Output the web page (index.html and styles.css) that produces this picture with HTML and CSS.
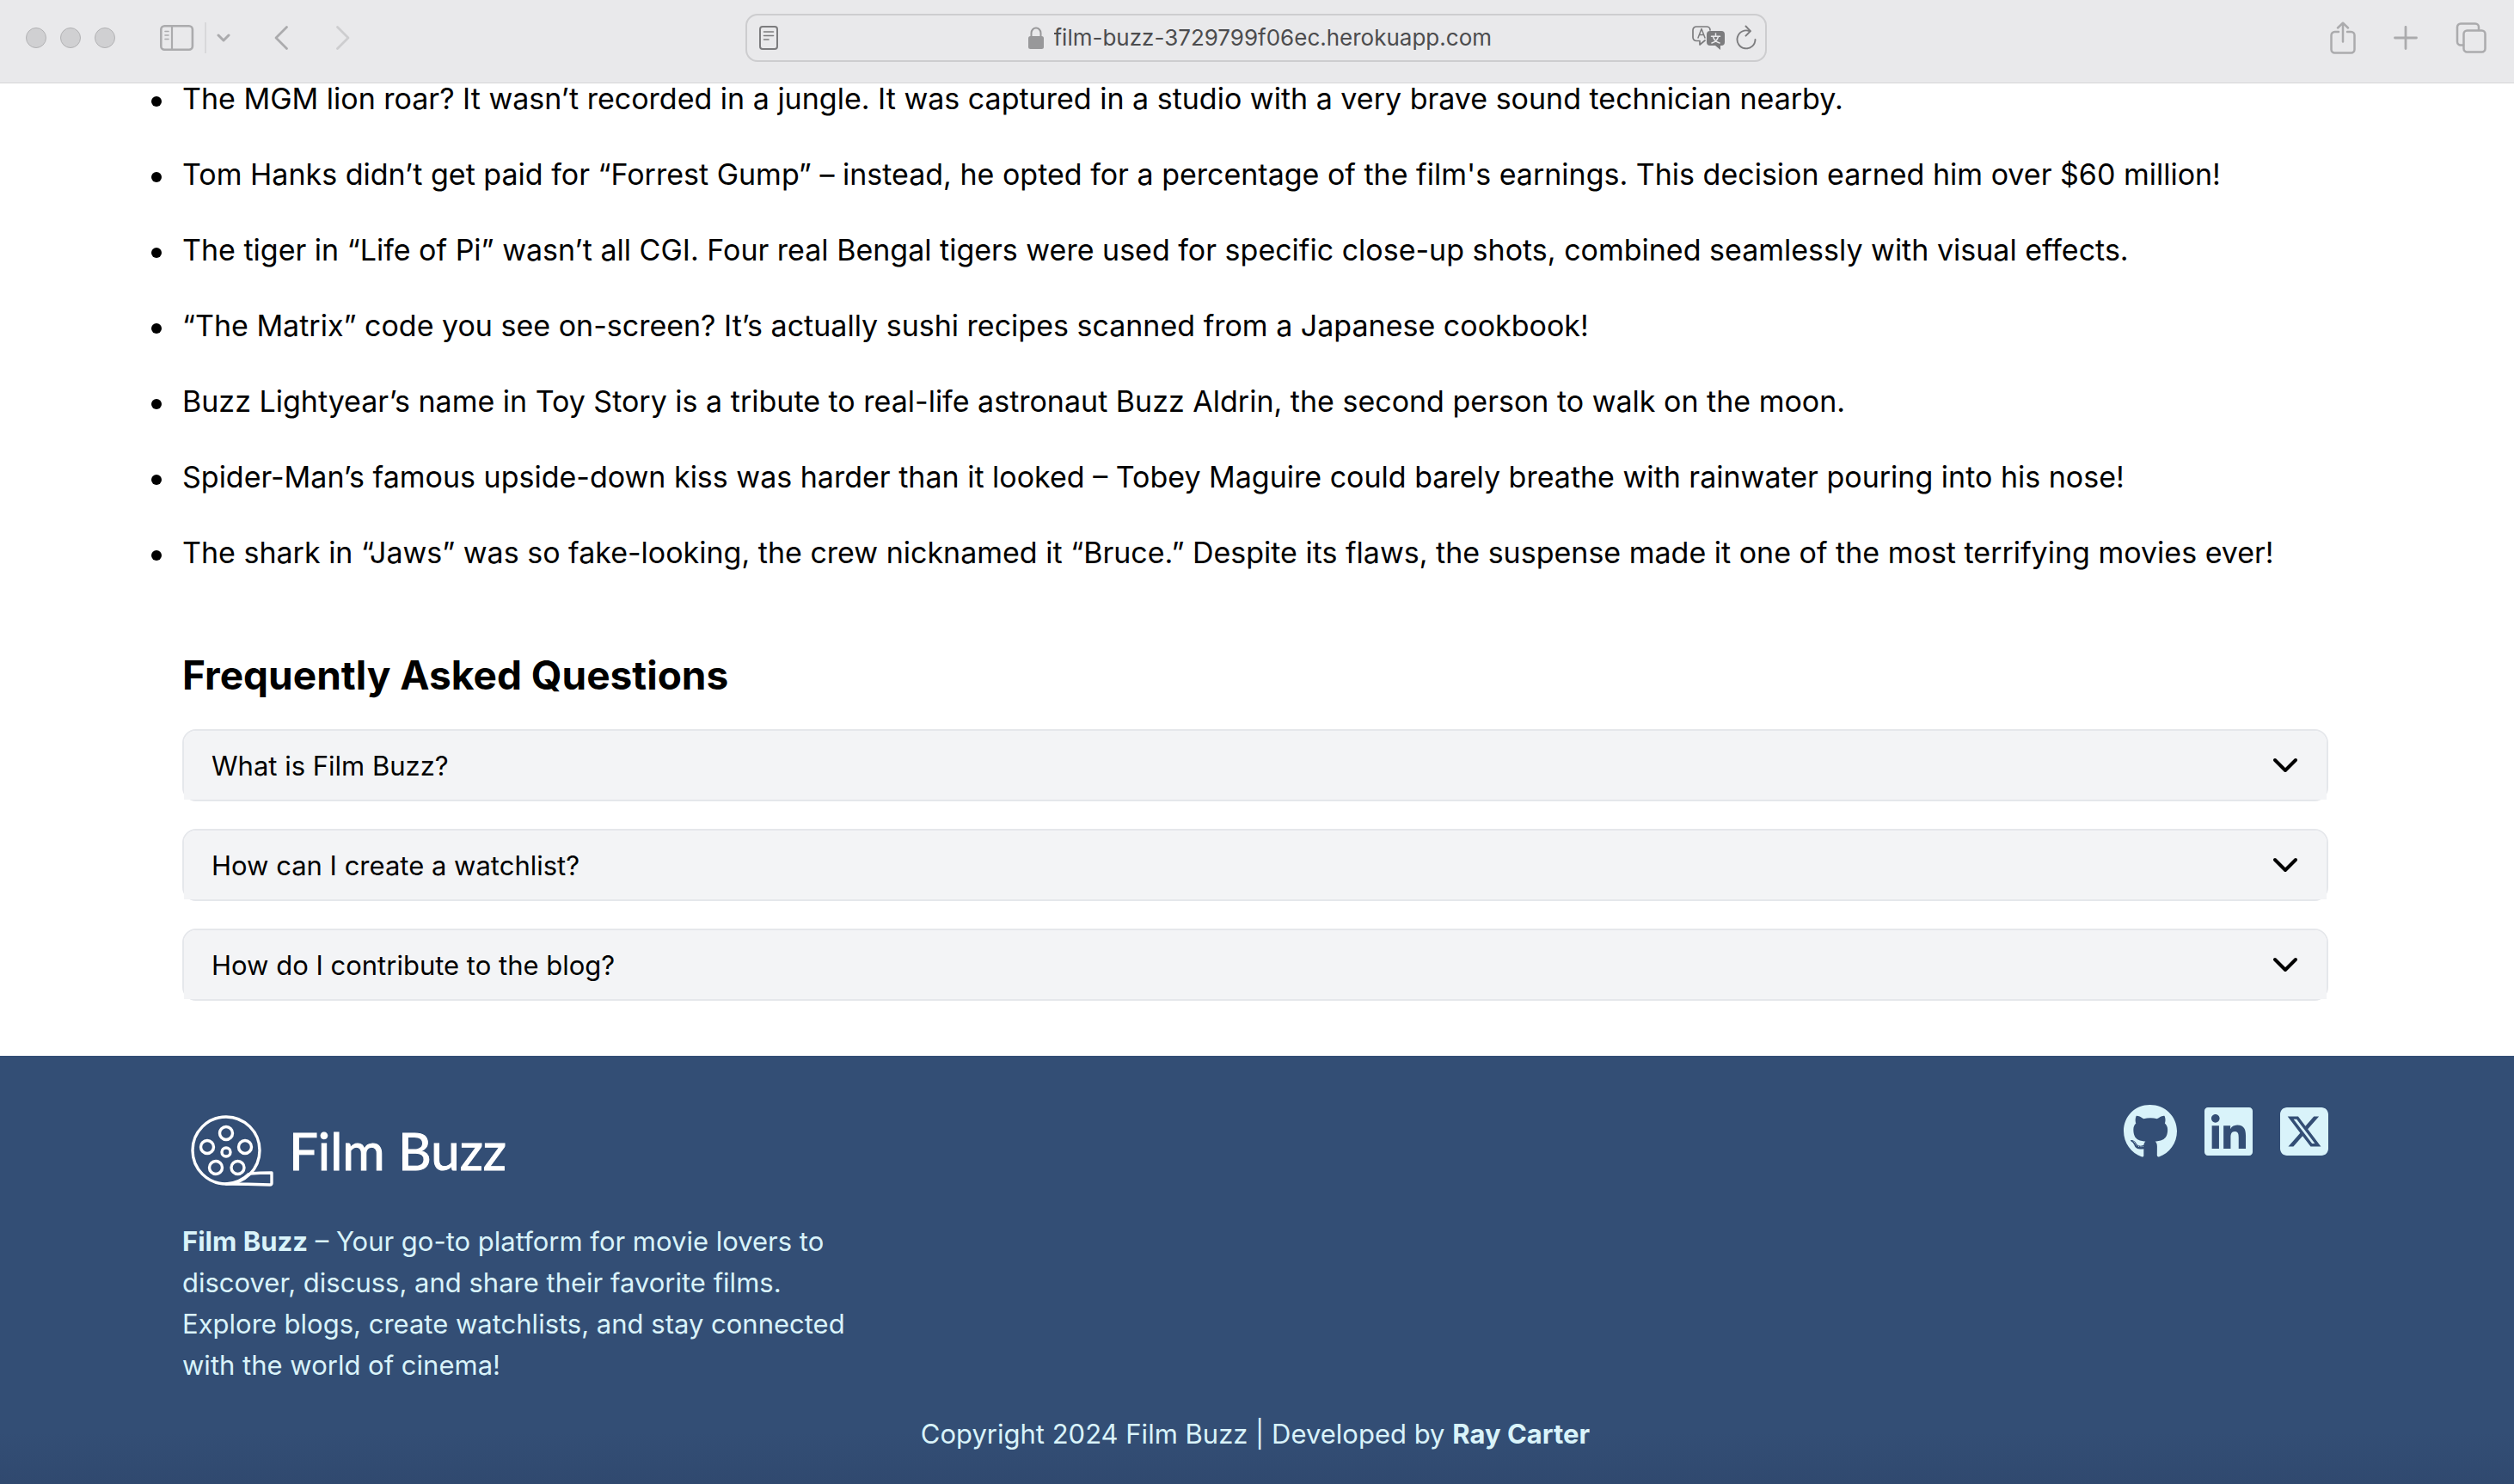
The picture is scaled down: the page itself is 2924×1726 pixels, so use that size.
FILE: index.html
```html
<!DOCTYPE html>
<html lang="en">
<head>
<meta charset="utf-8">
<title>Film Buzz</title>
<link rel="stylesheet" href="styles.css">
</head>
<body>
<header class="toolbar">
  <div class="toolbar-left">
    <div class="window-dots"><span class="dot"></span><span class="dot"></span><span class="dot"></span></div>
    <div class="sidebar-tools">
      <button class="tool" aria-label="Show sidebar"><svg width="40" height="30" viewBox="0 0 40 30"><rect x="1.3" y="1.3" width="36.6" height="27.4" rx="4" stroke-width="2.6"/><path d="M14 1v28" stroke-width="2.2"/><path d="M6 7.5h4M6 12h4M6 16.5h4" stroke-width="1.6"/></svg></button>
      <span class="divider"></span>
      <button class="tool" aria-label="Tab groups"><svg width="16" height="12" viewBox="0 0 16 12"><path d="M2 3l6 6 6-6" stroke-width="3"/></svg></button>
    </div>
    <div class="history">
      <button class="tool" aria-label="Back"><svg width="18" height="30" viewBox="0 0 18 30"><path d="M15.500 2.500L3 15l12.500 12.500" stroke-width="2.8"/></svg></button>
      <button class="tool faded" aria-label="Forward"><svg width="18" height="30" viewBox="0 0 18 30"><path d="M2.500 2.500L15 15 2.500 27.500" stroke-width="2.8"/></svg></button>
    </div>
  </div>
  <div class="address">
    <button class="tool dark" aria-label="Reader"><svg width="22" height="28" viewBox="0 0 22 28"><rect x="1" y="1" width="20" height="26" rx="3" stroke-width="2"/><path d="M5.500 7h11M5.500 11.500h11M5.500 16h5.500" stroke-width="1.600"/></svg></button>
    <div class="location">
      <svg width="18" height="26" viewBox="0 0 18 26"><rect x="0" y="11" width="18" height="15" rx="2.500" fill="#98989a"/><path d="M3.500 12V7.500a5.500 6 0 0 1 11 0V12" fill="none" stroke="#98989a" stroke-width="2"/></svg>
      <input class="url" type="text" aria-label="Address" value="film-buzz-3729799f06ec.herokuapp.com">
    </div>
    <div class="address-tools">
      <button class="tool dark" aria-label="Translate"><svg width="39" height="28" viewBox="0 0 39 28"><path d="M15 17l-6 5v-4.500H5A4 4 0 0 1 1 13.500V5a4 4 0 0 1 4-4h12a4 4 0 0 1 4 4" stroke-width="1.700"/><path d="M7 14l4-10.500L15 14M8.500 10.500h5" stroke-width="1.500"/><path d="M21 6h13a4 4 0 0 1 4 4v9a4 4 0 0 1-4 4h-1v5l-6-5h-6a4 4 0 0 1-4-4v-9a4 4 0 0 1 4-4z" fill="#7c7c7e" stroke="none"/><path d="M27.500 9v3M22.500 12.200h10M30.500 12.500c-1 4-4 6.500-7.500 7.500M24.500 12.500c1 4 4 6.500 7.500 7.500" stroke="#e9e9eb" stroke-width="1.500"/></svg></button>
      <button class="tool dark" aria-label="Reload"><svg width="24" height="30" viewBox="0 0 24 30"><path d="M16 7.200A10.500 10.500 0 1 0 22.500 17" stroke-width="1.900"/><path d="M11.500 1.500l5.500 5.700-5.500 5.500" stroke-width="1.900"/></svg></button>
    </div>
  </div>
  <div class="toolbar-right">
    <button class="tool" aria-label="Share"><svg width="30" height="38" viewBox="0 0 30 38"><path d="M10 12H5.500A4 4 0 0 0 1.500 16v16.500a4 4 0 0 0 4 4h19a4 4 0 0 0 4-4V16a4 4 0 0 0-4-4H20M15 23.500V2M9 7.500L15 1.700l6 5.800" stroke-width="2.500"/></svg></button>
    <button class="tool" aria-label="New tab"><svg width="28" height="28" viewBox="0 0 28 28"><path d="M14 1.500v25M1.500 14h25" stroke-width="2.800"/></svg></button>
    <button class="tool" aria-label="Tab overview"><svg width="36" height="36" viewBox="0 0 36 36"><rect x="9.500" y="9.500" width="25" height="25" rx="4" stroke-width="2.500"/><path d="M9 26.500H6a4 4 0 0 1-4-4V5.500a4 4 0 0 1 4-4h17a4 4 0 0 1 4 4V9" stroke-width="2.500"/></svg></button>
  </div>
</header>
<main class="content">
  <ul class="facts">
    <li>The MGM lion roar? It wasn’t recorded in a jungle. It was captured in a studio with a very brave sound technician nearby.</li>
    <li>Tom Hanks didn’t get paid for “Forrest Gump” – instead, he opted for a percentage of the film's earnings. This decision earned him over $60 million!</li>
    <li>The tiger in “Life of Pi” wasn’t all CGI. Four real Bengal tigers were used for specific close-up shots, combined seamlessly with visual effects.</li>
    <li>“The Matrix” code you see on-screen? It’s actually sushi recipes scanned from a Japanese cookbook!</li>
    <li>Buzz Lightyear’s name in Toy Story is a tribute to real-life astronaut Buzz Aldrin, the second person to walk on the moon.</li>
    <li>Spider-Man’s famous upside-down kiss was harder than it looked – Tobey Maguire could barely breathe with rainwater pouring into his nose!</li>
    <li>The shark in “Jaws” was so fake-looking, the crew nicknamed it “Bruce.” Despite its flaws, the suspense made it one of the most terrifying movies ever!</li>
  </ul>
  <section class="faq">
    <h2 class="faq-title">Frequently Asked Questions</h2>
    <div class="faq-list">
      <div class="faq-item"><button class="question" aria-expanded="false">What is Film Buzz?<svg class="chevron" width="32" height="32" viewBox="0 0 32 32"><path d="M4 10l12 12 12-12"/></svg></button></div>
      <div class="faq-item"><button class="question" aria-expanded="false">How can I create a watchlist?<svg class="chevron" width="32" height="32" viewBox="0 0 32 32"><path d="M4 10l12 12 12-12"/></svg></button></div>
      <div class="faq-item"><button class="question" aria-expanded="false">How do I contribute to the blog?<svg class="chevron" width="32" height="32" viewBox="0 0 32 32"><path d="M4 10l12 12 12-12"/></svg></button></div>
    </div>
  </section>
</main>
<footer class="footer">
  <div class="footer-top">
    <div class="about">
      <a class="logo" href="#">
        <svg width="110" height="108" viewBox="0 0 110 108" fill="none" stroke="#fff" stroke-width="3.400" stroke-linejoin="round"><circle cx="51" cy="54" r="39"/><circle cx="51" cy="34" r="7.500"/><circle cx="29" cy="50" r="7.500"/><circle cx="73" cy="50" r="7.500"/><circle cx="39" cy="74" r="7.500"/><circle cx="64.500" cy="74" r="7.500"/><circle cx="51" cy="56" r="5"/><path d="M78 81q12-1 26-1v12q0 2-2 2-26-1-51-1 16-1 27-12"/></svg>
        <span>Film Buzz</span>
      </a>
      <p class="blurb"><strong>Film Buzz</strong> – Your go-to platform for movie lovers to discover, discuss, and share their favorite films. Explore blogs, create watchlists, and stay connected with the world of cinema!</p>
    </div>
    <nav class="social" aria-label="Social links">
      <a href="#" aria-label="GitHub"><svg width="62" height="64" viewBox="0 0 496 512"><path d="M165.900 397.400c0 2-2.300 3.600-5.200 3.600-3.300.300-5.600-1.300-5.600-3.600 0-2 2.300-3.600 5.200-3.600 3-.300 5.600 1.300 5.600 3.600zm-31.100-4.500c-.700 2 1.300 4.300 4.300 4.900 2.600 1 5.600 0 6.200-2s-1.300-4.300-4.300-5.200c-2.600-.700-5.500.300-6.200 2.300zm44.200-1.700c-2.900.700-4.900 2.600-4.600 4.900.300 2 2.900 3.300 5.900 2.600 2.900-.700 4.900-2.600 4.600-4.600-.300-1.900-3-3.200-5.900-2.900zM244.800 8C106.100 8 0 113.300 0 252c0 110.900 69.800 205.800 169.500 239.200 12.800 2.300 17.300-5.600 17.300-12.100 0-6.200-.300-40.400-.300-61.400 0 0-70 15-84.700-29.800 0 0-11.400-29.100-27.800-36.600 0 0-22.900-15.700 1.600-15.400 0 0 24.900 2 38.600 25.800 21.900 38.600 58.600 27.500 72.900 20.900 2.300-16 8.800-27.100 16-33.700-55.900-6.200-112.300-14.300-112.300-110.500 0-27.500 7.600-41.300 23.600-58.900-2.600-6.500-11.100-33.300 2.600-67.900 20.900-6.500 69 27 69 27 20-5.600 41.500-8.500 62.800-8.500s42.800 2.900 62.800 8.500c0 0 48.100-33.600 69-27 13.700 34.700 5.200 61.400 2.600 67.900 16 17.700 25.800 31.500 25.800 58.900 0 96.500-58.900 104.200-114.800 110.500 9.200 7.900 17 22.900 17 46.400 0 33.700-.300 75.400-.300 83.600 0 6.500 4.600 14.400 17.300 12.100C428.200 457.800 496 362.900 496 252 496 113.300 383.500 8 244.800 8zM97.200 352.900c-1.300 1-1 3.300.700 5.200 1.600 1.600 3.900 2.300 5.200 1 1.300-1 1-3.300-.700-5.200-1.600-1.600-3.900-2.300-5.200-1zm-10.800-8.100c-.700 1.300.300 2.900 2.300 3.900 1.600 1 3.600.700 4.300-.700.700-1.300-.300-2.900-2.300-3.900-2-.600-3.600-.300-4.300.700zm32.400 35.600c-1.600 1.300-1 4.300 1.300 6.200 2.300 2.300 5.200 2.600 6.500 1 1.300-1.300.700-4.300-1.300-6.200-2.200-2.300-5.200-2.600-6.500-1zm-11.400-14.700c-1.600 1-1.600 3.600 0 5.900 1.600 2.300 4.300 3.300 5.600 2.300 1.600-1.300 1.600-3.900 0-6.200-1.400-2.300-4-3.300-5.600-2z"/></svg></a>
      <a href="#" aria-label="LinkedIn"><svg width="56" height="64" viewBox="0 0 448 512"><path d="M416 32H31.900C14.300 32 0 46.500 0 64.300v383.400C0 465.500 14.300 480 31.900 480H416c17.600 0 32-14.500 32-32.300V64.300c0-17.800-14.400-32.300-32-32.300zM135.400 416H69V202.200h66.500V416zm-33.200-243c-21.300 0-38.500-17.300-38.500-38.500S80.900 96 102.200 96c21.200 0 38.500 17.300 38.500 38.500 0 21.300-17.200 38.500-38.500 38.500zm282.100 243h-66.400V312c0-24.800-.500-56.700-34.500-56.700-34.600 0-39.900 27-39.900 54.900V416h-66.400V202.200h63.700v29.200h.900c8.900-16.800 30.600-34.500 62.900-34.500 67.200 0 79.700 44.300 79.700 101.900V416z"/></svg></a>
      <a href="#" aria-label="X"><svg width="56" height="64" viewBox="0 0 448 512"><path d="M64 32C28.700 32 0 60.700 0 96v320c0 35.300 28.700 64 64 64h320c35.300 0 64-28.700 64-64V96c0-35.300-28.700-64-64-64H64zm297.100 84L257.300 234.600 379.400 396h-95.600L209 298.100 123.300 396H75.800l111-126.900L69.700 116h98l67.700 89.500L313.600 116h47.500zM323.300 367.600L153.400 142.900h-28.300l171.800 224.700h26.300z"/></svg></a>
    </nav>
  </div>
  <p class="copyright">Copyright 2024 Film Buzz | Developed by <strong>Ray Carter</strong></p>
</footer>
</body>
</html>
```
FILE: styles.css
```css
* { box-sizing: border-box; }
body {
  margin: 0;
  min-height: 100vh;
  display: flex;
  flex-direction: column;
  background: #fff;
  color: #000;
  font-family: Inter, "Liberation Sans", sans-serif;
}
ul, h2, p { margin: 0; padding: 0; }
button { border: 0; padding: 0; background: none; font: inherit; color: inherit; }
svg { display: block; flex: none; }

/* Browser toolbar */
.toolbar {
  display: grid;
  grid-template-columns: 1fr minmax(0, 1188px) 1fr;
  align-items: center;
  height: 97px;
  padding: 0 32px 8px 30px;
  background: #e9e9eb;
  border-bottom: 1px solid #d6d6d8;
}
.toolbar-left, .window-dots, .sidebar-tools, .history, .toolbar-right, .address, .location, .address-tools {
  display: flex;
  align-items: center;
}
.window-dots { gap: 16px; margin-right: 52px; }
.dot {
  width: 24px;
  height: 24px;
  border-radius: 50%;
  background: #d0d0d2;
  border: 1px solid #b2b2b4;
}
.tool { fill: none; stroke: #ababad; stroke-linecap: round; stroke-linejoin: round; }
.tool.faded { stroke: #cdcdcf; }
.tool.dark { stroke: #7c7c7e; }
.sidebar-tools { gap: 12px; margin-right: 50px; }
.divider { width: 2px; height: 36px; background: #d8d8da; }
.history { gap: 54px; }
.address {
  justify-content: space-between;
  height: 56px;
  padding: 0 10px 0 14px;
  border: 2px solid #cdcdcf;
  border-radius: 14px;
}
.location { gap: 12px; margin-left: 56px; }
.url {
  width: 508px;
  padding: 0;
  border: 0;
  background: none;
  color: #4c4c4e;
  font: 26px/32px Inter, "Liberation Sans", sans-serif;
}
.address-tools { gap: 12px; }
.toolbar-right { justify-content: flex-end; gap: 44px; }

/* Page content */
.content { padding: 0 216px 64px 212px; }
.facts {
  display: flex;
  flex-direction: column;
  gap: 52px;
  margin-left: -36px;
  list-style: none;
  font-size: 34px;
  line-height: 36px;
}
.facts li { display: flex; gap: 24px; }
.facts li::before {
  content: "";
  flex: none;
  width: 12px;
  height: 12px;
  margin-top: 15px;
  border-radius: 50%;
  background: #000;
}
.faq { padding-top: 92px; }
.faq-title { margin-bottom: 31px; font-size: 46px; line-height: 64px; font-weight: 700; }
.faq-list { display: flex; flex-direction: column; gap: 32px; }
.faq-item { border: 2px solid #e5e7eb; border-radius: 16px; }
.question {
  display: flex;
  align-items: center;
  justify-content: space-between;
  width: 100%;
  height: 80px;
  padding: 0 32px;
  border-radius: 14px 14px 0 0;
  background: #f3f4f6;
  font-size: 31px;
}
.chevron { fill: none; stroke: #000; stroke-width: 4; stroke-linecap: round; stroke-linejoin: round; }

/* Footer */
.footer {
  flex: 1;
  padding: 56px 216px 32px 212px;
  background: linear-gradient(to top, #30496f, #334e75 60px);
  color: #d9f3fa;
  font-size: 31px;
  line-height: 48px;
}
.footer-top { display: flex; justify-content: space-between; align-items: flex-start; }
.about { max-width: 800px; }
.logo {
  display: flex;
  align-items: center;
  gap: 14px;
  margin-bottom: 28px;
  color: #fff;
  font: 60px/64px Lato, sans-serif;
  -webkit-text-stroke: 1px #fff;
  text-decoration: none;
}
.social { display: flex; gap: 32px; fill: #d9f3fa; }
.copyright { margin-top: 32px; text-align: center; }
```
